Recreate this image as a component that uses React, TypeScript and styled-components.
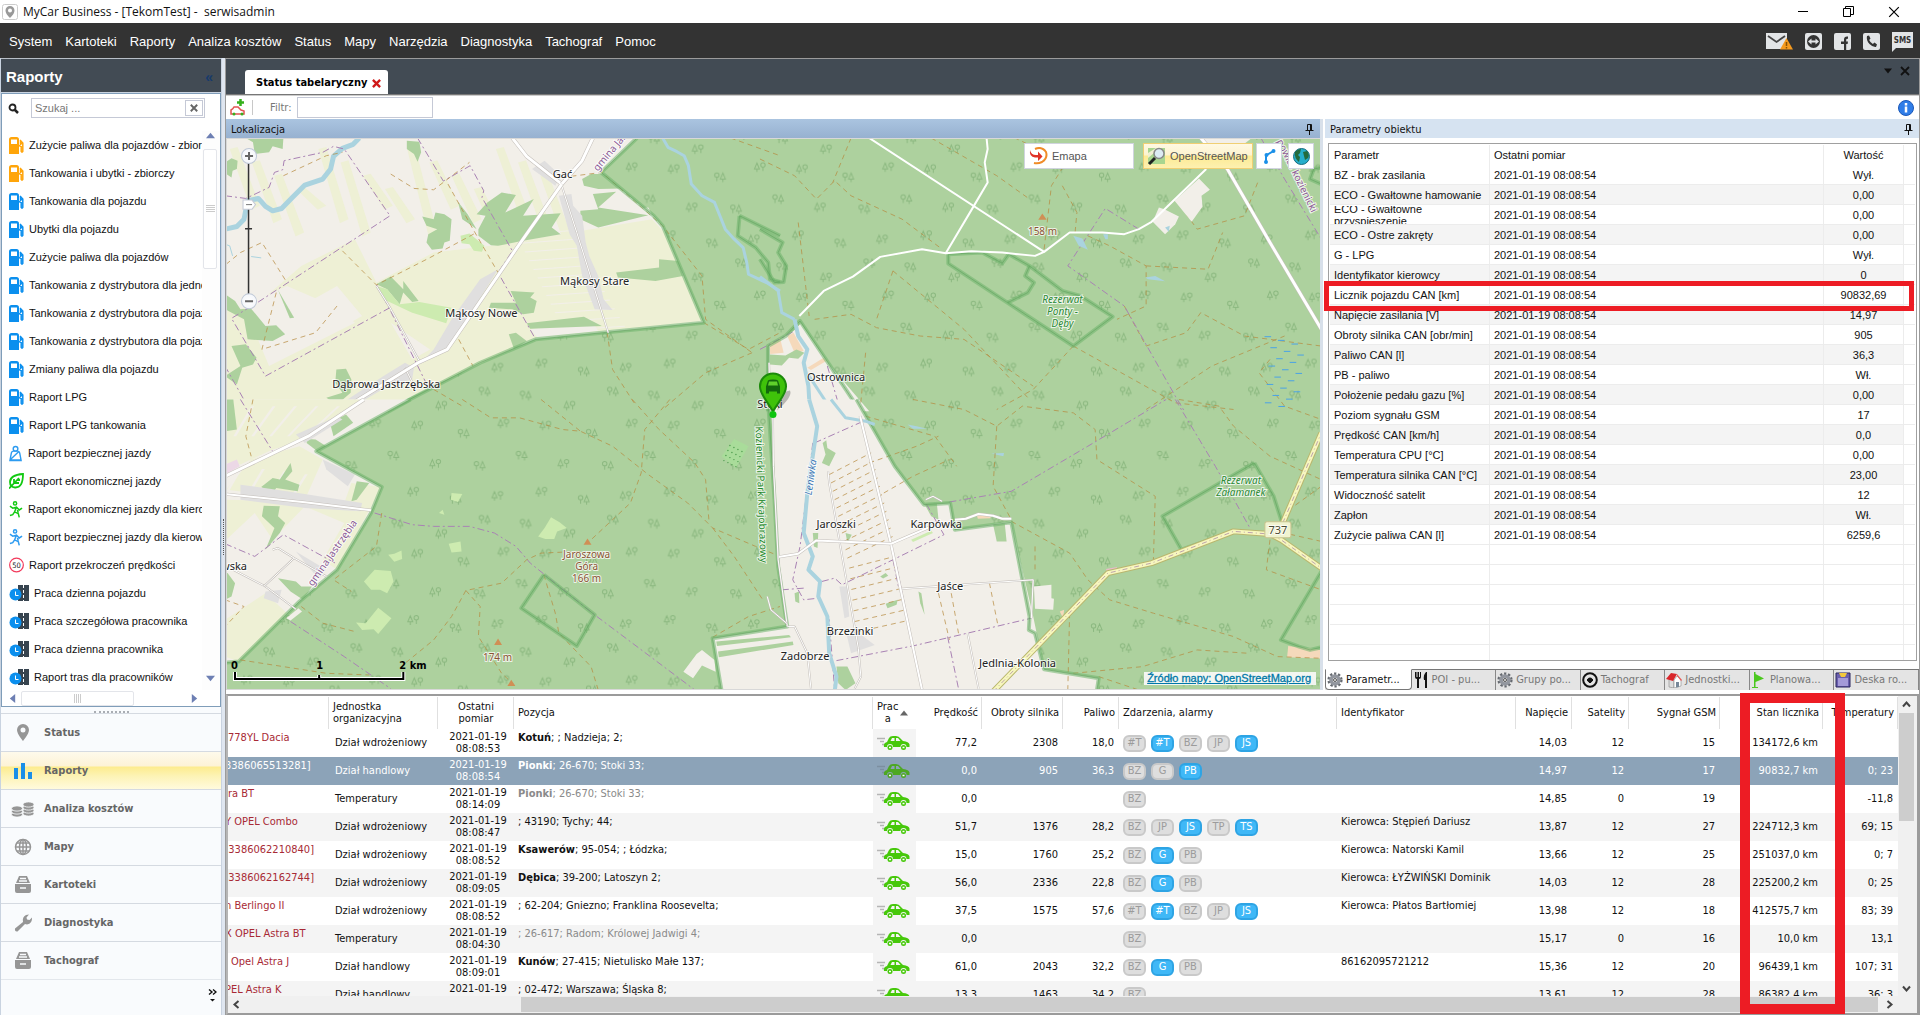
import React from 'react';
import styled, { createGlobalStyle, css } from 'styled-components';

const tahoma = '"DejaVu Sans Condensed", "DejaVu Sans", sans-serif';
const msSans = '"Liberation Sans", Arial, sans-serif';
const segoe = '"Open Sans", "Noto Sans", sans-serif';

const Global = createGlobalStyle`
  * { box-sizing: border-box; }
  body { margin: 0; background: #fff; font: 11px/14px ${msSans}; color: #111; overflow: hidden; }
  button, input { font: inherit; color: inherit; border: 0; padding: 0; margin: 0; background: none; }
  svg { display: block; flex: none; }
`;

/* ---------- window frame ---------- */

const Window = styled.div`
  display: flex;
  flex-direction: column;
  height: 100vh;
`;

const TitleBar = styled.header`
  display: flex;
  align-items: center;
  height: 23px;
  padding: 0 20px 0 2px;
  gap: 5px;
  font: 12px/22px ${segoe};
  white-space: pre;
`;

const Spacer = styled.div`
  flex: 1;
`;

const WindowButtons = styled.div`
  display: flex;
  gap: 34px;
`;

const MenuBar = styled.nav`
  display: flex;
  align-items: center;
  height: 35px;
  padding: 2px 7px 0 9px;
  gap: 13px;
  background: #333;
  color: #fff;
  font-size: 13px;
`;

const Contacts = styled.div`
  display: flex;
  align-items: center;
  gap: 12px;
`;

const Body = styled.div`
  display: flex;
  flex: 1;
  min-height: 0;
  background: #dfe6f0;
`;

/* ---------- sidebar ---------- */

const Sidebar = styled.aside`
  display: flex;
  flex-direction: column;
  width: 222px;
  border-left: 1px solid #c9d3e0;
  border-right: 1px solid #c9d3e0;
  background: #f9fbfd;
`;

const SideHeader = styled.h1`
  display: flex;
  justify-content: space-between;
  align-items: center;
  height: 35px;
  margin: 0;
  padding: 3px 8px 0 5px;
  border-top: 1px solid #b8bec6;
  border-bottom: 1px solid #c9d3e0;
  background: #424b54;
  color: #fff;
  font: bold 15px/20px ${msSans};
`;

const Collapse = styled.button`
  && { color: #173a6b; font-size: 14px; font-weight: bold; }
`;

const ListBox = styled.div`
  display: flex;
  flex-direction: column;
  flex: 1;
  min-height: 0;
  border: 1px solid #7f9db9;
  background: #fff;
`;

const SearchRow = styled.div`
  display: flex;
  align-items: center;
  gap: 12px;
  height: 37px;
  padding: 0 15px 9px 6px;
`;

const SearchBox = styled.label`
  display: flex;
  align-items: center;
  flex: 1;
  height: 20px;
  padding: 0 1px 0 3px;
  border: 1px solid #c5c9d6;
  background: #fff;
`;

const TextInput = styled.input`
  flex: 1;
  min-width: 0;
  height: 18px;
  outline: none;
  &::placeholder { color: #777; opacity: 1; }
`;

const ClearButton = styled.button`
  display: grid;
  place-items: center;
  width: 18px;
  height: 16px;
  border: 1px solid #c5c9d6 !important;
`;

const ListArea = styled.div`
  display: flex;
  flex: 1;
  min-height: 0;
`;

const ReportList = styled.ul`
  flex: 1;
  min-width: 0;
  margin: 0;
  padding: 0 0 0 7px;
  list-style: none;
  overflow: hidden;
`;

const ReportItem = styled.li`
  height: 28px;
`;

const ReportButton = styled.button`
  display: flex;
  align-items: center;
  gap: 5px;
  width: 100%;
  height: 28px;
  overflow: hidden;
  white-space: nowrap;
  text-align: left;
`;

const SideVScroll = styled.div`
  display: flex;
  flex-direction: column;
  align-items: center;
  width: 18px;
  background: #fdfdfd;
  padding: 0 2px 7px 0;
`;

const SideThumb = styled.div<{ $wide?: boolean }>`
  display: grid;
  place-items: center;
  border: 1px solid #e3e5ea;
  border-radius: 2px;
  background: #fff;
  ${p => p.$wide ? css`width: 113px; height: 15px; margin: 0 56px 0 4px;` : css`width: 14px; height: 120px; margin: 9px 0 auto;`}
`;

const SideHScroll = styled.div`
  display: flex;
  align-items: center;
  height: 16px;
  padding-left: 6px;
`;

const Grip = styled.div`
  width: 35px;
  height: 6px;
  margin: 0 auto;
  border-bottom: 2px dotted #a9adb3;
`;

const NavList = styled.nav`
  display: flex;
  flex-direction: column;
  height: 302px;
  flex: none;
`;

const NavButton = styled.button<{ $active?: boolean }>`
  && {
    display: grid;
    grid-template-columns: 43px 1fr;
    align-items: center;
    justify-items: center;
    height: 38px;
    border-top: 1px solid #d5dae1;
    background: ${p => p.$active ? 'linear-gradient(#fefaeb 0, #fdf3d6 14px, #fdec8e 15px, #fdf3b5 24px, #fffbe0 38px)' : '#f9fbfd'};
    color: #666;
    font: bold 11px/14px ${tahoma};
  }
  span { justify-self: start; }
`;

const NavFooter = styled.div`
  display: flex;
  flex: 1;
  justify-content: flex-end;
  align-items: center;
  padding: 0 4px 4px 0;
  border-top: 1px solid #e3e7ec;
`;

const Splitter = styled.div`
  display: grid;
  place-items: center;
  width: 3px;
  &::after { content: ''; height: 36px; border-left: 1px dotted #555; }
`;

/* ---------- document area ---------- */

const Document = styled.main`
  display: flex;
  flex-direction: column;
  flex: 1;
  min-width: 0;
  border: solid #9b9b9b;
  border-width: 1px 1px 0 1px;
  background: #fff;
`;

const TabStrip = styled.div`
  display: flex;
  align-items: flex-end;
  height: 36px;
  padding: 0 9px 0 19px;
  background: #424b54;
  border-bottom: 1px solid #777;
`;

const DocTab = styled.button`
  && {
    display: flex;
    align-items: center;
    gap: 5px;
    height: 24px;
    padding: 2px 7px 0 11px;
    border-radius: 3px 3px 0 0;
    background: #fff;
    color: #000;
    font: bold 11px/14px ${tahoma};
  }
`;

const StripButtons = styled.div`
  display: flex;
  align-items: center;
  gap: 8px;
  height: 100%;
  padding-bottom: 11px;
`;

const Toolbar = styled.div`
  display: flex;
  align-items: center;
  height: 24px;
  padding: 0 5px 0 4px;
  border-top: 1px solid #ccc;
  color: #777;
  font: 11px/14px ${tahoma};
`;

const Divider = styled.div`
  width: 1px;
  height: 15px;
  margin: 0 17px 0 6px;
  background: #c8c8c8;
`;

const FilterLabel = styled.label`
  display: flex;
  align-items: center;
  gap: 6px;
`;

const FilterInput = styled.input`
  && { width: 136px; height: 21px; border: 1px solid #c5c9d6; }
`;

const Panels = styled.div`
  display: flex;
  flex: 1;
  min-height: 0;
`;

const MapPanel = styled.section`
  display: flex;
  flex-direction: column;
  flex: 1;
  min-width: 0;
  border-right: 3px solid #d8e0ea;
`;

const PanelTitle = styled.h2<{ $active?: boolean }>`
  display: flex;
  justify-content: space-between;
  align-items: center;
  height: 19px;
  margin: 0;
  padding: 2px 6px 0 5px;
  background: ${p => p.$active ? 'linear-gradient(#aac4e0, #97b1d0)' : '#d6e3f1'};
  color: #111;
  font: 11px/16px ${tahoma};
`;

const MapView = styled.div`
  position: relative;
  flex: 1;
  min-height: 0;
  overflow: hidden;
  border: 1px solid #d8d8d8;
  border-width: 1px 0 1px 1px;
`;

const MapSvg = styled.svg`
  width: 100%;
  height: 100%;
`;

const MapTools = styled.div`
  position: absolute;
  top: 4px;
  right: 6px;
  display: flex;
  gap: 6px;
`;

const MapTool = styled.button<{ $on?: boolean; $wide?: boolean }>`
  && {
    display: flex;
    align-items: center;
    justify-content: ${p => p.$wide ? 'flex-start' : 'center'};
    gap: 4px;
    width: ${p => p.$wide ? '110px' : '26px'};
    height: 26px;
    padding-left: ${p => p.$wide ? '4px' : '0'};
    margin-right: ${p => p.$wide && !p.$on ? '3px' : p.$on ? '-3px' : '0'};
    border: 1px solid ${p => p.$on ? '#f0cf73' : '#d0d4de'};
    background: ${p => p.$on ? 'linear-gradient(#fff9e2 0, #fdf3cf 11px, #fdeb93 12px, #fdf0b0 100%)' : '#fff'};
    color: #555;
    font-size: 11px;
    white-space: nowrap;
  }
`;

const Attribution = styled.a`
  position: absolute;
  right: 4px;
  bottom: 4px;
  padding: 0 5px 0 3px;
  background: rgba(248, 248, 248, 0.92);
  color: #0078a8;
  font: 11px/13px ${msSans};
  -webkit-text-stroke: 0.3px #0078a8;
`;

const ParamPanel = styled.section`
  display: flex;
  flex-direction: column;
  width: 596px;
  padding-left: 2px;
  position: relative;
`;

const ParamFrame = styled.div`
  flex: 1;
  min-height: 0;
  margin: 5px 2px 8px 3px;
  padding: 1px;
  overflow: hidden;
  border: 1px solid #a0a0a0;
`;

const ParamTable = styled.table`
  width: 100%;
  table-layout: fixed;
  border-collapse: separate;
  border-spacing: 0;
  th { font-weight: normal; height: 20px; padding: 0 4px; text-align: left; border-right: 1px solid #ececec; }
  td { height: 20px; padding: 0 4px; border-right: 1px solid #ececec; border-bottom: 1px solid #ececec; white-space: nowrap; }
  th:nth-child(3), td:nth-child(3) { text-align: center; }
  th:last-child, td:last-child { border-right: 0; }
`;

const ParamRow = styled.tr<{ $odd?: boolean }>`
  td:not(:last-child) { background: ${p => p.$odd ? '#f4f4f4' : '#fff'}; }
`;

const TwoLines = styled.div`
  display: flex;
  align-items: center;
  height: 18px;
  overflow: hidden;
  white-space: normal;
  line-height: 12px;
`;

const BottomTabs = styled.div`
  display: flex;
  height: 21px;
  background: #e4e4e4;
`;

const BottomTab = styled.button<{ $active?: boolean }>`
  && {
    display: flex;
    align-items: center;
    gap: 3px;
    flex: 1 1 0;
    min-width: 0;
    padding: 0 4px 0 1px;
    white-space: nowrap;
    font: 11px/14px ${tahoma};
    color: ${p => p.$active ? '#111' : '#777'};
    border-top: 1px solid ${p => p.$active ? 'transparent' : '#777'};
    ${p => p.$active
      ? css`background: #fff; border-right: 1px solid #777; border-left: 1px solid #777; border-bottom: 1px solid #777; border-radius: 0 0 4px 4px;`
      : css`box-shadow: inset -1px 0 #888;`}
  }
`;

const Highlight = styled.div<{ $w: number }>`
  position: absolute;
  border: ${p => p.$w}px solid #ed1c24;
  pointer-events: none;
`;

const RowHighlight = styled(Highlight)`
  top: 162px;
  left: 1px;
  right: 5px;
  height: 30px;
`;

/* ---------- vehicle grid ---------- */

const GridPanel = styled.section`
  position: relative;
  flex: none;
  height: 321px;
  margin-top: 4px;
  border: 2px solid #9b9b9b;
  border-left-color: #b5b5b5;
`;

const GridArea = styled.div`
  display: flex;
  height: 300px;
  overflow: hidden;
`;

const GridScroll = styled.div`
  flex: 1;
  min-width: 0;
  overflow: hidden;
`;

const Grid = styled.table`
  width: 100%;
  table-layout: fixed;
  border-collapse: separate;
  border-spacing: 0;
  font: 11px/12px ${tahoma};
`;

type Align = 'left' | 'right' | 'center';

const Head = styled.th<{ $a: Align; $line?: boolean }>`
  height: 33px;
  padding: 1px 4px 0 4px;
  text-align: ${p => p.$a};
  font-weight: normal;
  white-space: nowrap;
  background: ${p => p.$line ? 'linear-gradient(#e0e0e0, #e0e0e0) right 1px / 1px 32px no-repeat' : 'none'};
`;

const SortHead = styled.div`
  display: flex;
  align-items: center;
  gap: 2px;
`;

const Row = styled.tr<{ $sel?: boolean; $odd?: boolean }>`
  background: ${p => p.$sel ? '#8ca3b8' : p.$odd ? '#f4f4f4' : '#fff'};
  color: ${p => p.$sel ? '#fff' : '#111'};
`;

const Cell = styled.td<{ $a?: Align; $top?: boolean; $shade?: boolean; $pad?: number }>`
  height: 28px;
  padding: ${p => p.$top ? '3px' : '0'} ${p => p.$a === 'right' ? '5px' : '0'} 0 ${p => p.$pad ?? 4}px;
  text-align: ${p => p.$a ?? 'left'};
  vertical-align: ${p => p.$top ? 'top' : 'middle'};
  white-space: nowrap;
  overflow: hidden;
  background: ${p => p.$shade ? '#f4f4f4' : 'transparent'};
`;

const Plate = styled.div<{ $cut?: number; $sel?: boolean }>`
  text-indent: ${p => p.$cut ?? 0}px;
  color: ${p => p.$sel ? '#fff' : '#a82a35'};
`;

const Place = styled.span<{ $dim?: boolean }>`
  color: ${p => p.$dim ? '#8a8a8a' : 'inherit'};
`;

const Chips = styled.div`
  display: flex;
  gap: 5px;
`;

const Chip = styled.span<{ $on?: boolean }>`
  display: grid;
  place-items: center;
  width: 23px;
  height: 17px;
  border: 2px solid ${p => p.$on ? '#2ea4e4' : '#c9c9c9'};
  border-radius: 6px;
  background: ${p => p.$on ? '#3fb8f7' : '#dedede'};
  color: ${p => p.$on ? '#fff' : '#9b9b9b'};
`;

const VScroll = styled.div`
  display: flex;
  flex-direction: column;
  align-items: center;
  justify-content: space-between;
  width: 19px;
  padding-right: 2px;
  background: #f0f0f0;
`;

const VThumb = styled.div`
  width: 15px;
  height: 108px;
  margin: 1px 0 auto;
  background: #cdcdcd;
`;

const HScroll = styled.div`
  display: flex;
  align-items: center;
  height: 17px;
  background: #f0f0f0;
`;

const HThumb = styled.div`
  flex: 1;
  height: 15px;
  margin: 0 3px 0 276px;
  background: #cdcdcd;
`;

const ArrowButton = styled.button`
  display: grid;
  place-items: center;
  width: 17px;
  height: 16px;
`;

const ColumnHighlight = styled(Highlight)`
  top: -3px;
  right: 72px;
  bottom: -1px;
  width: 105px;
`;

/* ---------- icons ---------- */

const Chevron = ({ r }: { r: number }) => (
  <svg width="9" height="9" viewBox="0 0 9 9" fill="none" stroke="#444" strokeWidth="2">
    <path d="M1 6.500 4.500 2.500 8 6.500" transform={`rotate(${r} 4.5 4.5)`} />
  </svg>
);

const Triangle = ({ r, c = '#6d7fb3', s = 9 }: { r: number; c?: string; s?: number }) => (
  <svg width={s} height={s} viewBox="0 0 10 10"><path d="M0 8 5 2l5 6z" fill={c} transform={`rotate(${r} 5 5)`} /></svg>
);

const Cross = ({ s, w, c }: { s: number; w: number; c: string }) => (
  <svg width={s} height={s} viewBox="0 0 10 10" stroke={c} strokeWidth={w}><path d="M1 1l8 8M9 1 1 9" /></svg>
);

const Pin = ({ c = '#111' }: { c?: string }) => (
  <svg width="9" height="11" viewBox="0 0 9 11" fill="none" stroke={c}><path d="M2.500 6.500v-6h4v6M5.500.5v6M.5 6.500h8M4.500 6.500V11" /></svg>
);

const Pump = ({ c }: { c: string }) => (
  <svg width="15" height="17" viewBox="0 0 15 17" fill="none" stroke={c}>
    <path d="M0 17V2.500Q0 0 2.500 0h5Q10 0 10 2.500V17z" fill={c} stroke="none" />
    <path d="M2 2.500h6V7H2z" fill="#fff" stroke="none" />
    <path d="M11 3l2.800 3v8.500q-.8 1.500-1.600 0V9.500L10 8.500M13 6l-1.500 1.500V4" strokeWidth="1.500" />
  </svg>
);

const Belt = () => (
  <svg width="14" height="17" viewBox="0 0 15 17" fill="none" stroke="#2d9bf0" strokeWidth="1.500">
    <circle cx="7" cy="3.500" r="2.500" /><path d="M1 16l1.500-8q.5-2 2.500-2h4q2 0 2.500 2L13 16zM10 7 1 15.500M1 15.500h12" />
  </svg>
);

const Leaf = () => (
  <svg width="15" height="16" viewBox="0 0 15 16" fill="none" stroke="#12c912" strokeWidth="1.800">
    <path d="M14 1Q1 2 1 9q0 5 5 5.500Q14 15 14 1zM0 15.500 10 5M5 10V6M5 10h5M8 7h3" />
  </svg>
);

const Runner = ({ c }: { c: string }) => (
  <svg width="14" height="17" viewBox="0 0 15 17" fill="none" stroke={c} strokeWidth="1.600">
    <circle cx="6.500" cy="2" r="1.700" /><path d="M1 5l3 2 4-1 3 3 3-2M8 6l-2 5 4 2 1 4M6 11l-2 3-3 1M9 9l1 3" />
  </svg>
);

const Limit = () => (
  <svg width="15" height="16" viewBox="0 0 16 16">
    <circle cx="8" cy="8" r="7.300" fill="#fff" stroke="#f23a5c" strokeWidth="1.300" />
    <text x="8" y="11" fontSize="8" textAnchor="middle" fontFamily="DejaVu Sans Condensed" fill="#222">50</text>
  </svg>
);

const Work = () => (
  <svg width="20" height="16" viewBox="0 0 20 16">
    <path d="M9 0h11v16H9z" fill="#37444f" /><path d="M14.500 0v16" stroke="#fff" strokeDasharray="3 2" />
    <circle cx="6.500" cy="9.500" r="6" fill="#0b8fee" /><path d="M6.500 6.500v4h3" fill="none" stroke="#fff" />
  </svg>
);

const NavIcon = ({ kind }: { kind: string }) => {
  const g = '#969696';
  return (
    <svg width="24" height="18" viewBox="0 0 24 18">
      {kind === 'pin' && <path d="M12 0a6 6 0 0 0-6 6c0 4 6 11 6 11s6-7 6-11a6 6 0 0 0-6-6zm0 3.500a2.500 2.500 0 1 1 0 5 2.500 2.500 0 0 1 0-5z" fill={g} fillRule="evenodd" />}
      {kind === 'bars' && <path d="M3 6h4v11H3zM10 1h4v16h-4zM17 10h4v7h-4z" fill="#1a8fe8" />}
      {kind === 'coins' && [0, 3, 6, 9].map(y => (
        <g key={y} fill={g} stroke="#f9fbfd" strokeWidth=".8">
          <ellipse cx="17.500" cy={13.5 - y} rx="5.500" ry="2.600" />
          {y < 7 && <ellipse cx="6" cy={14.5 - y} rx="5.500" ry="2.600" />}
        </g>
      ))}
      {kind === 'globe' && <g fill="none" stroke={g} strokeWidth="1.500"><circle cx="12" cy="9" r="7.500" /><ellipse cx="12" cy="9" rx="3.500" ry="7.500" /><path d="M12 1.500v15M4.500 9h15M5.500 5h13M5.500 13h13" /></g>}
      {kind === 'drawer' && <g fill={g}><path d="M8 0h8l3 7H5zM4 8h16v7q0 2-2 2H6q-2 0-2-2z" /><path d="M9 2.500h6M8 5h8M9 12h6" stroke="#f9fbfd" strokeWidth="1.500" /></g>}
      {kind === 'wrench' && <path d="M4 14.500 12 8q-1-5 3-7l3-.5-2.500 3 .5 2 2.500.5L21 3.500q.5 6-5 7l-2-.5-7.500 7.500q-3 .5-2.500-3z" fill={g} />}
    </svg>
  );
};

const Car = ({ sel }: { sel?: boolean }) => (
  <svg width="33" height="16" viewBox="0 0 33 16">
    <path d="M0 3.500h8M3 6.500h4M5 9.500h2" stroke={sel ? '#7c8fa0' : '#b5b5b5'} strokeWidth="1.500" />
    <g fill={sel ? '#4da822' : '#46c80a'}>
      <path d="M7 12q-1-4 3-5l2-4q1-2 4-2h3q3 0 4.500 2.500L26 6q6 .5 6.500 3.500V12h-3a3 3 0 0 0-6 0H16a3 3 0 0 0-6 0z" />
      <circle cx="13" cy="12.500" r="2.500" /><circle cx="26.500" cy="12.500" r="2.500" />
    </g>
    <path d="M13.500 6 15 3h2.500v3zM19 3h2l2.500 3H19z" fill={sel ? '#8ca3b8' : '#f4f4f4'} />
    <path d="M12 12.500h2M25.500 12.500h2" stroke="#fff" strokeWidth="1.500" />
  </svg>
);

const Gear = () => (
  <svg width="16" height="16" viewBox="0 0 16 16" fill="none">
    <circle cx="8" cy="8" r="6.300" stroke="#666a70" strokeWidth="2.600" strokeDasharray="2.200 1.800" />
    <circle cx="8" cy="8" r="4" stroke="#92969e" strokeWidth="3.500" /><circle cx="8" cy="8" r="1.500" fill="#eee" stroke="#555" />
  </svg>
);

const TabIcon = ({ kind }: { kind: string }) => {
  if (kind === 'gear') return <Gear />;
  return (
    <svg width="16" height="16" viewBox="0 0 16 16">
      {kind === 'fork' && <path d="M2 0v5q0 2 2 2v9h2V7q2 0 2-2V0H7v5H6V0H4.500v5h-1V0zM13 0q-3 3-2 8h1v8h2V0z" fill="#111" />}
      {kind === 'wheel' && <g fill="none" stroke="#111" strokeWidth="2"><circle cx="8" cy="8" r="6.800" /><circle cx="8" cy="8" r="1.500" fill="#111" /><path d="M5 8h6M8 8v3" /></g>}
      {kind === 'house' && <g><path d="M3 7v8l5 1V8z" fill="#ddd" stroke="#888" strokeWidth=".6" /><path d="M8 8l3-4 4 4v6l-7 2z" fill="#fff" stroke="#888" strokeWidth=".6" /><path d="M0 7 5 1l6 1-4 7z" fill="#d9262b" /><path d="M11 2l5 6-1 1-4-5z" fill="#e85b57" /><path d="M10 10h3v5l-3 .5z" fill="#789" /></g>}
      {kind === 'flag' && <g fill="#4bc81e"><path d="M3 0h1.500v15H3zM1 15h6v1H1zM4.500 2 13 6.500 4.500 10z" /></g>}
      {kind === 'disk' && <g><path d="M1 1h14v14H1z" fill="#6a5fae" stroke="#29245c" /><path d="M4 1h8l-2 4H6z" fill="#f2c83c" /><path d="M3 6h10v8H3z" fill="#a49ad8" /></g>}
    </svg>
  );
};

/* ---------- map ---------- */

const Shape = ({ d, f }: { d: string; f: string }) => <polygon points={d} fill={f} />;
const Line = ({ d, c, w, dash, o }: { d: string; c: string; w: number; dash?: string; o?: number }) => (
  <polyline points={d} fill="none" stroke={c} strokeWidth={w} strokeDasharray={dash} opacity={o} strokeLinejoin="round" vectorEffect="non-scaling-stroke" />
);
const Road = ({ d, w = 2 }: { d: string; w?: number }) => <><Line d={d} c="#c4bfba" w={w + 1} /><Line d={d} c="#fff" w={w} /></>;
const Yellow = ({ d }: { d: string }) => <><Line d={d} c="#b9b66e" w={6} /><Line d={d} c="#f7f7be" w={4} /><Line d={d} c="#bda3ad" w={1} dash="5 3 1 3" /></>;
const Border = ({ d }: { d: string }) => <Line d={d} c="#a982b4" w={1} dash="7 3 2 3" />;
const Track = ({ d }: { d: string }) => <Line d={d} c="#b78a3e" w={1} dash="5 4" o={0.7} />;
const Park = ({ d }: { d: string }) => <><Line d={d} c="#6fb56c" w={4} o={0.55} /><Line d={d} c="#5a9c58" w={1} o={0.5} /></>;

const FOREST = '#add19e', FIELD = '#eef0d5', LAND = '#f2efe9', GRASS = '#cdebb0', TOWN = '#e0dfdf', WATER = '#aad3df';

const fieldStrips: string[] = [];
for (let i = 0; i < 15; i++) {
  const x = 30 + i * 62;
  fieldStrips.push(`${x},${90 + (i % 4) * 40} ${x + 22},${84 + (i % 4) * 40} ${x + 84},${260 + (i % 3) * 40} ${x + 60},${272 + (i % 3) * 40}`);
}

const pastures: string[] = [];
for (let i = 0; i < 12; i++) {
  const y = 345 + i * 26;
  pastures.push(`${830 + i * 12},${y} ${980 + i * 14},${y - 12} ${980 + i * 14},${y - 9} ${832 + i * 12},${y + 3}`);
}

const NorthWest = () => (
  <g transform="translate(220 120) scale(.35714 .33333)">
    <Shape f={LAND} d="0,57 1168,57 1068,160 1215,290 1240,320 1300,470 1355,610 885,660 730,730 540,830 470,875 0,875" />
    {fieldStrips.map(d => <Shape key={d} f={FIELD} d={d} />)}
    <Shape f={FIELD} d="0,580 100,560 230,440 380,360 440,490 600,400 760,380 870,360 1210,300 1245,340 1350,605 885,655 725,735 460,870 0,870" />
    <Shape f={LAND} d="70,560 190,500 320,560 380,610 140,740" />
    <Shape f={LAND} d="230,560 330,500 400,590 350,620" />
    <Shape f={LAND} d="480,610 590,690 540,720" />
    <Shape f={LAND} d="870,630 1040,600 1060,635 890,655" />
    <Shape f={LAND} d="1060,280 1200,265 1210,285 1070,300" />
    {pastures.map(d => <Shape key={d} f={LAND} d={d} />)}
    <Shape f={FOREST} d="75,57 180,57 178,90 150,82 140,100 100,105 95,70" />
    <Shape f={FOREST} d="17,130 35,118 52,125 50,150 38,155 35,175 20,165" />
    <Shape f={FOREST} d="525,65 560,68 565,100 555,128 545,105 525,90" />
    <Shape f={FOREST} d="725,330 745,290 720,285 750,250 790,220 830,228 800,280 880,240 850,290 955,282 930,325 955,345 850,365 780,380 760,378 725,350" />
    <Shape f={FOREST} d="568,292 600,300 605,280 630,285 650,300 645,365 630,370 625,388 595,392 580,370 585,345 610,330 580,320" />
    <Shape f={FOREST} d="668,248 695,285 720,330 705,318 680,300" />
    <Shape f={FOREST} d="440,495 480,472 515,510 515,485 558,545 540,548 515,520 505,555 470,510" />
    <Shape f={GRASS} d="440,500 470,510 505,555 560,548 650,565 635,612 570,590 540,580 460,540" />
    <Shape f={GRASS} d="675,350 700,343 742,380 735,398 712,395 700,375 678,372" />
    <Shape f={FOREST} d="17,525 45,545 60,570 90,568 130,620 160,618 185,645 150,665 80,660 70,600 17,570" />
    <Shape f={FOREST} d="165,512 210,595 198,597" />
    <Shape f={FOREST} d="35,680 75,675 105,715 95,735 65,745 50,795 17,770 60,740" />
    <Shape f={FOREST} d="328,750 355,748 370,780 368,820 330,855 300,835 345,820 325,790" />
    <Shape f={FOREST} d="1010,275 1060,270 1045,225 1110,218 1060,265 1200,288 1060,325 1010,300" />
    <Shape f={FOREST} d="1110,460 1230,445 1230,420 1285,425 1297,470 1220,485 1115,475" />
    <Shape f={FOREST} d="860,612 1020,592 1070,620 870,628" />
    <Shape f={FOREST} d="815,515 882,520 870,535 888,545 880,580 850,585 820,570 755,565 760,550 830,550" />
    <Shape f={FOREST} d="1015,180 1040,165 1075,165 1125,208 1060,210 1020,200" />
    <Shape f={FOREST} d="810,645 830,640 860,665 825,690" />
    <Shape f={TOWN} d="950,230 985,225 990,260 1015,290 1025,370 1035,410 1060,470 1075,540 1100,572 1050,570 1015,470 1000,380 980,345" />
    <Shape f={TOWN} d="650,600 730,480 780,450 640,690 560,735 600,690" />
    <Shape f={TOWN} d="330,860 460,770 520,730 545,745 540,780 480,795 370,865" />
    <Shape f={TOWN} d="875,150 910,125 955,170 940,200" />
    <Line c={WATER} w={5} d="17,330 50,322 70,300 80,245 110,238 130,262 150,275 175,268 205,235 240,198 290,180 312,150 320,112 345,88 375,76 392,57" />
    <Line c={WATER} w={3} d="1240,57 1255,85 1280,98 1300,110 1312,140 1320,195 1350,230 1385,250 1400,290 1415,330 1440,360 1465,385 1475,430 1480,465 1530,490 1568,515" />
    <Line c={WATER} w={1} d="17,375 30,380 38,410" /><Line c={WATER} w={1} d="90,412 118,416" />
    <Border d="17,230 75,238 140,205 155,160 178,152 182,125 290,100 320,82 350,90 478,290 110,548 35,597 130,770 478,565" />
    <Border d="555,57 627,186 702,140 740,215 735,235 820,395 780,460 885,660" />
    <Border d="440,497 475,565 590,815" /><Border d="17,740 85,870" />
    <Track d="20,435 60,400 120,370 190,490" /><Track d="180,170 300,110 345,100" /><Track d="345,395 440,497 590,415 720,340" />
    <Track d="480,165 545,208 600,212 700,130" /><Track d="640,195 710,330 780,460" /><Track d="160,520 120,690 270,640 330,560" />
    <Track d="960,175 1070,160 1240,320 1350,470 1360,600 1490,700" /><Track d="1355,610 1480,690 1568,640" /><Track d="1430,57 1568,110" />
    <Track d="1085,640 1100,750 1160,850" /><Track d="1490,700 1360,760 1240,870" /><Track d="670,660 710,740" /><Track d="600,810 680,860" />
    <Park d="1168,57 1068,160 1215,290 1240,320 1355,610 885,660 730,730 470,875" />
    <Park d="1455,290 1450,350 1500,385 1535,430 1540,480 1568,488" />
    <Park d="1455,290 1568,350" />
    <Road w={1} d="958,200 1000,340 1088,640" /><Road w={1} d="440,500 478,565 560,725" /><Road w={1} d="520,745 550,810" />
    <Road w={3} d="820,57 860,112 958,195 830,390 638,690 560,728 345,870" /><Road w={3} d="1045,57 1015,125 958,195" />
    <Shape f="#f5d9bb" d="1540,672 1570,660 1570,705 1540,702" />
  </g>
);

const SouthWest = () => (
  <g transform="translate(220 400) scale(.35714 .33333)">
    <Shape f={LAND} d="0,0 535,0 272,155 455,262 425,340 330,510 225,605 55,785 0,790" />
    <Shape f={FIELD} d="0,0 400,0 230,125 150,150 60,195 17,190" />
    <Shape f={FIELD} d="90,180 225,140 290,180 240,300 20,270" />
    <Shape f={FIELD} d="370,250 455,262 330,510 290,480 350,370 240,320 150,420 100,340 20,420 17,300 350,310" />
    <Shape f={FIELD} d="17,660 130,580 190,640 55,785 17,770" />
    {[0, 1, 2, 3, 4, 5].map(i => <Shape key={i} f={LAND} d={`${60 + i * 60},${200 + i * 8} ${68 + i * 60},${200 + i * 8} ${28 + i * 60},${275 + i * 6} ${20 + i * 60},${275 + i * 6}`} />)}
    {[0, 1, 2, 3, 4].map(i => <Shape key={i} f={LAND} d={`${90 + i * 60},20 ${98 + i * 60},20 ${48 + i * 50},110 ${40 + i * 50},110`} />)}
    <Shape f={FOREST} d="200,190 205,215 185,240 225,255 220,275 160,265 145,290 130,270 118,262 150,235 170,240" />
    <Shape f={FOREST} d="125,318 170,320 165,350 185,370 170,400 130,450 155,385 120,350" />
    <Shape f={FOREST} d="165,535 215,545 230,560 260,560 235,600 200,575" />
    <Shape f={FOREST} d="310,70 355,45 375,70 320,110" /><Shape f={FOREST} d="385,245 420,250 385,300 370,305" />
    <Shape f={FOREST} d="17,510 45,550 35,590 17,600" /><Shape f={FOREST} d="17,0 40,0 50,90 17,95" />
    <Shape f={FOREST} d="247,118 270,120 300,140 275,155 245,130" />
    <Shape f={TOWN} d="60,255 190,275 400,310 395,335 240,325 60,300" /><Shape f={TOWN} d="215,105 330,50 345,60 240,130" />
    <Shape f={TOWN} d="290,180 380,225 360,260 300,210" /><Shape f={TOWN} d="130,575 175,570 165,610 125,595" /><Shape f={TOWN} d="215,455 300,510 280,540" />
    <Shape f="#ecd8e6" d="17,195 50,180 58,200 17,225" />
    <Track d="95,0 75,110 90,170" /><Track d="17,600 70,620 17,680" /><Track d="455,340 440,440 320,540 370,575" />
    <Border d="60,0 150,155" /><Border d="17,432 100,470 180,405 325,490" />
    <Park d="535,0 272,155 455,262 425,340 330,510 225,605 55,785 0,790" />
    <Border d="435,340 540,375 600,380 700,380 770,400 830,440 870,490 1050,645 1330,870" />
    <Border d="200,665 350,770 480,866" />
    <Track d="680,0 760,55 840,55 960,90 1010,95 1100,140 1200,225 1310,310 1380,385 1500,440 1568,470" />
    <Track d="1155,0 1230,90 1330,190 1360,240 1370,370" /><Track d="1260,0 1190,90 1180,220 1150,310 1030,430" />
    <Track d="900,0 1010,95" /><Track d="1010,455 900,460 860,480 790,550 690,572 650,650 600,720 520,790" />
    <Track d="690,572 730,620 725,710 790,820 830,860" /><Track d="908,525 940,640 950,700 1040,800 1060,870" />
    <Track d="230,620 290,670 380,695" /><Track d="60,780 180,800 300,820 420,825" /><Track d="1380,385 1440,470 1520,600" /><Track d="1380,712 1480,650 1568,620" />
    <Park d="908,525 845,625 1000,738 1050,645 908,525" />
    <Shape f={GRASS} d="892,410 910,385 928,353 952,368 972,385 945,395 937,418 912,418" />
    <Shape f={GRASS} d="405,545 435,510 480,514 488,545 470,580 450,570 425,570" />
    <Shape f={GRASS} d="383,668 410,670 445,624 482,655 445,702 432,688 400,690" />
    <Shape f={GRASS} d="642,432 675,425 678,455 650,458" /><Shape f={GRASS} d="650,280 680,283 668,307 648,300" />
    <Shape f={GRASS} d="473,465 490,462 510,452 512,478 490,486" /><Shape f={GRASS} d="615,340 625,330 630,345" />
    <Shape f="#a9dc9a" d="1440,118 1480,140 1445,205 1405,170" />
    <Shape f={LAND} d="1298,815 1335,762 1350,750 1385,780 1388,815 1350,797 1325,835" /><Shape f={LAND} d="188,655 222,625 232,635 200,662" />
    <Road w={3} d="405,0 250,110 17,230" /><Road w={2} d="17,283 240,308 425,332" />
    <Road w={1} d="40,510 130,560 215,628" /><Road w={1} d="125,560 210,475 165,445 150,450" /><Road w={1} d="210,475 300,530" />
    {[[1030, 427], [780, 727], [817, 850]].map(([x, y]) => <Shape key={x} f="#d08f55" d={`${x - 11},${y + 8} ${x},${y - 11} ${x + 11},${y + 8}`} />)}
  </g>
);

const NorthEast = () => (
  <g transform="translate(760 120) scale(.36364 .33333)">
    <Shape f={LAND} d="25,680 95,632 112,612 190,735 300,875 25,875" />
    <Shape f="#f5d9bb" d="27,680 55,655 65,700 28,704" /><Shape f="#f5d9bb" d="75,650 92,640 120,695 95,700" /><Shape f="#f5d9bb" d="130,745 175,715 182,725 140,752" />
    <Shape f={FOREST} d="27,705 70,708 100,690 122,700 105,718 80,715 60,738 27,735" />
    <Track d="0,120 95,170 155,240 205,185 250,230 330,270 390,300 500,390" /><Track d="250,57 200,190" /><Track d="470,57 650,170 740,240" />
    <Track d="105,310 135,590" /><Track d="150,600 250,585 320,625 440,650 560,660 750,800" /><Track d="365,455 320,600" /><Track d="365,455 560,630 740,840" />
    <Track d="780,390 800,200 840,130 700,57" /><Track d="830,200 870,280 865,340" /><Track d="860,680 1140,850 1300,870" /><Track d="860,680 750,810 650,870" />
    <Track d="900,350 960,380 1060,440 1060,560 980,600" /><Track d="1060,440 1230,450 1270,340" /><Track d="1140,240 1200,330 1330,290 1370,180" />
    <Track d="1000,560 1060,680 1170,640 1210,580 1330,650 1541,680" /><Track d="1060,870 1240,740 1440,650" /><Track d="290,700 275,870" /><Track d="1400,720 1370,760 1440,860 1541,900" />
    <Border d="1040,330 948,268 845,440 1000,560 1140,830 1165,875" /><Border d="1375,57 1440,180 1541,360" /><Border d="0,690 100,632" /><Border d="185,740 220,870" />
    <Park d="22,875 22,680 70,650 110,605 190,735 275,875" />
    <Park d="517,405 517,433 860,680 968,592 880,530 830,515 740,440 683,405 665,432 610,400 517,405" /><Park d="740,440 728,470 752,490 735,520 680,550" />
    <Park d="0,330 62,370 50,400 72,440 65,488 40,490 0,420" /><Park d="1541,195 1510,180 1520,150 1541,145" />
    <Shape f={LAND} d="1078,308 1095,265 1110,270 1150,292 1140,315 1112,345" /><Shape f={LAND} d="1138,245 1205,178 1235,212 1212,230 1215,262 1185,308" />
    <Shape f={WATER} d="1112,325 1125,320 1122,338" /><Shape f={WATER} d="860,350 885,358 900,392 875,380" /><Shape f={WATER} d="942,345 955,345 955,360 948,360" />
    <Shape f={WATER} d="1058,475 1085,470 1112,486 1065,480" /><Shape f={LAND} d="1210,57 1350,57 1300,100 1240,90" />
    <Line c={WATER} w={3} d="0,472 50,515 60,580 95,600" /><Line c={WATER} w={4} d="95,600 105,650 130,690 120,730 133,800 137,875" /><Line c={WATER} w={3} d="135,770 195,870" />
    <Line c="#fff" w={2} d="300,57 780,398 755,410 665,400 580,396 510,402 445,390 330,413 255,472 175,515 108,590" />
    <Line c="#fff" w={2} d="510,402 590,255 625,190 617,130 625,90 622,57" /><Line c="#fff" w={2} d="780,398 850,340 940,340 1000,345 1040,330 1075,308 1225,150" />
    <Road w={3} d="1210,57 1283,150 1400,370 1541,630" /><Road w={1} d="25,730 28,870" />
    {Array.from({ length: 20 }, (_, i) => <Line key={i} c="#4aa3e6" w={1} d={`${1385 + (i * 37) % 95},${652 + i * 11} ${1403 + (i * 37) % 95},${652 + i * 11}`} />)}
    <Shape f="#d08f55" d="764,302 775,283 787,302" />
  </g>
);

const SouthEast = () => (
  <g transform="translate(760 400) scale(.36364 .33333)">
    <Shape f={LAND} d="30,0 265,0 370,200 450,315 522,310 535,390 690,365 750,650 780,808 930,835 925,875 -105,875 -130,715 75,680 50,500" />
    <Shape f={LAND} d="752,560 800,555 800,595 807,597 805,630 755,627" />
    <Shape f={FOREST} d="450,310 485,305 490,360 470,350" /><Shape f={FOREST} d="640,375 672,372 677,425 650,425" />
    <Shape f={FOREST} d="172,130 182,122 185,145 208,160 190,200 170,190 180,165" /><Shape f={FOREST} d="210,800 240,800 262,850 235,870 215,850" />
    <Shape f={GRASS} d="415,420 470,393 475,400 420,427" /><Shape f={FOREST} d="95,580 107,575 108,610 97,605" /><Shape f={FOREST} d="330,530 345,520 352,528 338,536" />
    <Shape f={FOREST} d="145,400 160,400 158,445 148,440" /><Shape f={FOREST} d="235,400 252,405 240,430" /><Shape f={FOREST} d="435,575 443,580 452,645 440,610" />
    <Shape f={FOREST} d="345,612 378,600 375,615 350,625" /><Shape f={FOREST} d="-120,725 80,705 85,712 -118,738" /><Shape f={FOREST} d="-115,755 90,725 92,735 -113,772" />
    <Shape f={TOWN} d="218,560 238,560 245,650 232,655" /><Shape f={TOWN} d="235,690 260,690 315,735 250,760" />
    <Shape f="#f5d9bb" d="1450,738 1541,750 1541,776 1447,772" /><Shape f="#f5d9bb" d="595,345 635,345 632,356 598,357" /><Shape f="#f5d9bb" d="823,635 835,630 832,655" />
    <Shape f="#e9bcc9" d="950,508 980,502 978,515 952,520" /><Shape f={WATER} d="405,75 430,80 458,88 420,88" /><Shape f={WATER} d="635,162 670,160 668,170" />
    {Array.from({ length: 11 }, (_, i) => <Track key={i} d={`${190 + i * 5},${225 + i * 25} ${305 + i * 6},${160 + i * 25}`} />)}
    {Array.from({ length: 7 }, (_, i) => <Track key={i} d={`${245 + i * 3},${505 + i * 32} ${370 + i * 6},${470 + i * 32}`} />)}
    <Track d="490,580 520,720" /><Track d="525,580 545,700" /><Track d="630,550 652,670" /><Track d="300,190 430,140 490,110" /><Track d="340,280 420,230 520,180" />
    <Track d="420,0 560,30 650,80 720,20 860,40 920,90 925,180 1085,290 1080,480" /><Track d="650,80 640,260 690,360" /><Track d="290,50 480,110 540,200" />
    <Track d="755,440 755,520" /><Track d="690,365 850,460 900,540 960,600 1080,640 1300,710 1420,770 1541,775" /><Track d="850,640 845,870" /><Track d="860,820 1050,800 1200,750 1340,760" />
    <Track d="1541,260 1440,340" /><Track d="1541,425 1440,400" /><Track d="1400,420 1390,510 1541,570" /><Track d="1150,0 1260,20 1300,80 1400,170 1541,240" /><Track d="930,830 1040,870" />
    <Border d="210,782 420,738 745,655" /><Border d="150,130 290,62" /><Border d="170,545 205,535 225,555 505,405 455,310" /><Border d="520,307 690,275 900,140 1115,0" />
    <Border d="1140,0 1250,200 1345,385" /><Border d="145,130 110,440 90,540 120,600 160,595 190,660 205,870" /><Border d="60,570 120,565" /><Border d="515,710 545,866" /><Border d="375,500 420,738" /><Border d="365,480 380,560" />
    <Park d="22,0 40,300 50,500 75,680 -130,715 -105,875" /><Park d="265,0 370,200 450,315 522,310 535,390 690,368 740,650 738,690 755,700 780,808 930,835 925,870" />
    <Park d="1357,190 1105,350 1157,450 1300,395" /><Park d="1357,190 1410,290 1432,365" /><Park d="1541,515 1430,720 1480,740 1510,750 1541,742" />
    <Line c={WATER} w={4} d="135,0 157,80 130,280 120,400 145,470 133,510 165,545 160,590 185,650 190,760 210,830 205,875" /><Line c={WATER} w={3} d="195,0 235,55 290,65 315,75" />
    <Road w={2} d="275,50 330,300 360,435 445,870" /><Road w={1} d="187,215 190,250 270,745 277,830 260,866" />
    <Road w={2} d="50,472 105,462 155,422 360,432 475,378" /><Road w={1} d="390,567 750,540 745,655" /><Road w={1} d="75,680 95,680 130,760 140,866" /><Road w={1} d="570,700 600,866" />
    <Road w={1} d="35,0 37,200 50,480 75,680" /><Road w={1} d="455,300 475,290 500,305" /><Road w={2} d="535,360 565,357 600,343 640,348 665,357 690,357" /><Road w={1} d="20,590 30,630 75,672" />
    <Yellow d="640,875 955,520 1075,490 1300,395 1400,403 1430,420 1541,505" /><Yellow d="1435,370 1541,100" />
  </g>
);

const MapText = styled.text<{ $c?: string; $s?: number; $i?: boolean }>`
  font-family: "Noto Sans", "Open Sans", sans-serif;
  font-size: ${p => p.$s ?? 11}px;
  font-style: ${p => p.$i ? 'italic' : 'normal'};
  fill: ${p => p.$c ?? '#222'};
  stroke: rgba(255, 255, 255, 0.75);
  stroke-width: 2px;
  paint-order: stroke;
  text-anchor: middle;
`;

const ScaleText = styled.text`
  font: bold 11px ${tahoma};
`;

const towns: [string, number, number][] = [
  ['Gać', 563, 179], ['Mąkosy Stare', 595, 286], ['Mąkosy Nowe', 482, 318], ['Dąbrowa Jastrzębska', 387, 389],
  ['Stoki', 770, 409], ['Ostrownica', 836, 382], ['Jaroszki', 836, 528], ['Karpówka', 936, 528], ['Jaśce', 950, 590],
  ['Brzezinki', 850, 635], ['Zadobrze', 805, 660], ['Jedlnia-Kolonia', 1017, 667], ['wska', 235, 570],
];

const Tree = ({ x, y, flip }: { x: number; y: number; flip: boolean }) => (
  <g transform={`translate(${x} ${y}) scale(${flip ? -1 : 1} 1)`} fill="none" stroke="#8bb880">
    <circle cx="-3" cy="-2" r="2.200" /><path d="M-3 0v4M3 -4 .5 2h5zM3 2v3" />
  </g>
);

const trees = [[14, 12], [58, 22], [101, 8], [34, 42], [80, 50], [120, 40], [10, 72], [52, 80], [96, 82], [30, 108], [72, 116], [114, 112]];

const MapDrawing = () => (
  <MapSvg viewBox="228 140 1092 549" preserveAspectRatio="xMinYMin slice" role="img" aria-label="Mapa">
    <defs>
      <pattern id="trees" width="128" height="128" patternUnits="userSpaceOnUse">
        {trees.map(([x, y], i) => <Tree key={i} x={x} y={y} flip={i % 2 === 1} />)}
      </pattern>
      <radialGradient id="knob"><stop offset="0" stopColor="#fff" /><stop offset="1" stopColor="#f4f6fa" /></radialGradient>
    </defs>
    <rect x="200" y="100" width="1800" height="1200" fill={FOREST} />
    <rect x="200" y="100" width="1800" height="1200" fill="url(#trees)" />
    <NorthWest /><SouthWest /><NorthEast /><SouthEast />
    {[0, 1, 2, 3].flatMap(i => [0, 1, 2, 3].map(j => <circle key={`${i}${j}`} cx={730 + i * 4 - j * 2} cy={446 + j * 5 + i * 2} r=".7" fill="#4c9a4c" />))}
    <rect x="1264" y="522" width="26" height="16" rx="2" fill="#f0f3cf" stroke="#c8c48e" />
    <MapText x="1277" y="534" $c="#4a4a30">737</MapText>
    {towns.map(([t, x, y]) => <MapText key={t} x={x} y={y}>{t}</MapText>)}
    {[['Rezerwat', 1062, 304], ['Ponty -', 1062, 316], ['Dęby', 1062, 328], ['Rezerwat', 1240, 484], ['Załamanek', 1240, 496]].map(([t, x, y]) => (
      <MapText key={`${t}${y}`} x={x} y={y} $c="#2c8a35" $s={10} $i>{t}</MapText>
    ))}
    {[['158 m', 1042, 236], ['Jaroszowa', 587, 558], ['Góra', 587, 570], ['166 m', 587, 582], ['174 m', 498, 661]].map(([t, x, y]) => (
      <MapText key={t} x={x} y={y} $c="#8a5433" $s={10}>{t}</MapText>
    ))}
    <MapText transform="translate(336 555) rotate(-55)" $c="#8a5a95" $s={10}>gmina Jastrzębia</MapText>
    <MapText transform="translate(613 155) rotate(-50)" $c="#8a5a95" $s={10}>gmina Ja..</MapText>
    <MapText transform="translate(1293 178) rotate(64)" $c="#8a5a95" $s={10}>powiat kozienicki</MapText>
    <MapText transform="translate(758 495) rotate(88)" $c="#1f8a2b" $s={10}>Kozienicki Park Krajobrazowy</MapText>
    <MapText transform="translate(814 478) rotate(-82)" $c="#3f78b5" $s={10} $i>Leniwka</MapText>

    <path d="M777 411q16-14 13-20l-8 2z" fill="#333" opacity=".3" />
    <path d="M773 412C767 401 760 395 760 387a13 13 0 0 1 26 0c0 8-7 14-13 25z" fill="#3fc20a" stroke="#1c8a0a" strokeWidth="2" />
    <path d="M766 387l2-6q1-1 5-1t5 1l2 6v7h-3v-2h-8v2h-3z" fill="#12680c" /><path d="M768 386l1-4h8l1 4z" fill="#5fd02b" />
    <circle cx="773" cy="415" r="3.500" fill="#0fc40f" />

    <path d="M249.500 160v140M246 229.500h7" stroke="#333" strokeWidth="1.500" />
    <path d="M244 201h9l3.500 4.500L253 210h-9z" fill="#fff" stroke="#c5c9d6" /><path d="M247 205.500h6" stroke="#777" />
    {[157, 302].map(y => <circle key={y} cx="250" cy={y} r="7.500" fill="url(#knob)" stroke="#bfc8d6" />)}
    <path d="M246 157h8M250 153v8M246 302h8" stroke="#666" strokeWidth="2" />
    <ScaleText x="232" y="669">0</ScaleText><ScaleText x="317" y="669">1</ScaleText><ScaleText x="400" y="669">2 km</ScaleText>
    <path d="M236 672v7h168v-7M320 675v4" fill="none" stroke="#fff" strokeWidth="4" />
    <path d="M236 672v7h168v-7M320 675v4" fill="none" stroke="#000" strokeWidth="2" />
  </MapSvg>
);

/* ---------- data ---------- */

const menu = ['System', 'Kartoteki', 'Raporty', 'Analiza kosztów', 'Status', 'Mapy', 'Narzędzia', 'Diagnostyka', 'Tachograf', 'Pomoc'];

const orange = <Pump c="#ffa50a" />;
const blue = <Pump c="#0b8fee" />;
const reports: [React.ReactNode, string][] = [
  [orange, 'Zużycie paliwa dla pojazdów - zbiorczy'], [orange, 'Tankowania i ubytki - zbiorczy'], [blue, 'Tankowania dla pojazdu'],
  [blue, 'Ubytki dla pojazdu'], [blue, 'Zużycie paliwa dla pojazdów'], [blue, 'Tankowania z dystrybutora dla jednostki'],
  [blue, 'Tankowania z dystrybutora dla pojazdu'], [blue, 'Tankowania z dystrybutora dla pojazdów'], [blue, 'Zmiany paliwa dla pojazdu'],
  [blue, 'Raport LPG'], [blue, 'Raport LPG tankowania'], [<Belt />, 'Raport bezpiecznej jazdy'], [<Leaf />, 'Raport ekonomicznej jazdy'],
  [<Runner c="#12c912" />, 'Raport ekonomicznej jazdy dla kierowcy'], [<Runner c="#2d9bf0" />, 'Raport bezpiecznej jazdy dla kierowcy'],
  [<Limit />, 'Raport przekroczeń prędkości'], [<Work />, 'Praca dzienna pojazdu'], [<Work />, 'Praca szczegółowa pracownika'],
  [<Work />, 'Praca dzienna pracownika'], [<Work />, 'Raport tras dla pracowników'],
];

const nav = [['pin', 'Status'], ['bars', 'Raporty'], ['coins', 'Analiza kosztów'], ['globe', 'Mapy'], ['drawer', 'Kartoteki'], ['wrench', 'Diagnostyka'], ['drawer', 'Tachograf']];

const params = [
  ['BZ - brak zasilania', 'Wył.'], ['ECO - Gwałtowne hamowanie', '0,00'], ['ECO - Gwałtowne przyspieszenie', '0,00'], ['ECO - Ostre zakręty', '0,00'],
  ['G - LPG', 'Wył.'], ['Identyfikator kierowcy', '0'], ['Licznik pojazdu CAN [km]', '90832,69'], ['Napięcie zasilania [V]', '14,97'],
  ['Obroty silnika CAN [obr/min]', '905'], ['Paliwo CAN [l]', '36,3'], ['PB - paliwo', 'Wł.'], ['Położenie pedału gazu [%]', '0,00'],
  ['Poziom sygnału GSM', '17'], ['Prędkość CAN [km/h]', '0,0'], ['Temperatura CPU [°C]', '0,00'], ['Temperatura silnika CAN [°C]', '23,00'],
  ['Widoczność satelit', '12'], ['Zapłon', 'Wł.'], ['Zużycie paliwa CAN [l]', '6259,6'],
];

const tabs = [['gear', 'Parametr...'], ['fork', 'POI - pu...'], ['gear', 'Grupy po...'], ['wheel', 'Tachograf'], ['house', 'Jednostki...'], ['flag', 'Planowa...'], ['disk', 'Deska ro...']];

type Column = { t: string; w?: number; a: Align; line: boolean };
const columns: Column[] = [
  { t: '', w: 101, a: 'left', line: true }, { t: 'Jednostka\norganizacyjna', w: 109, a: 'left', line: true }, { t: 'Ostatni\npomiar', w: 76, a: 'center', line: true },
  { t: 'Pozycja', a: 'left', line: true }, { t: 'Prac\na', w: 43, a: 'center', line: false }, { t: 'Prędkość', w: 66, a: 'right', line: true },
  { t: 'Obroty silnika', w: 81, a: 'right', line: true }, { t: 'Paliwo', w: 56, a: 'right', line: true }, { t: 'Zdarzenia, alarmy', w: 218, a: 'left', line: true },
  { t: 'Identyfikator', w: 179, a: 'left', line: true }, { t: 'Napięcie', w: 56, a: 'right', line: true }, { t: 'Satelity', w: 57, a: 'right', line: true },
  { t: 'Sygnał GSM', w: 91, a: 'right', line: true }, { t: 'Stan licznika', w: 103, a: 'right', line: true }, { t: 'Temperatury', w: 75, a: 'right', line: true },
];

type Vehicle = {
  plate: string; cut?: number; unit: string; time: string; city: string; rest: string; dim?: boolean; speed: string; rpm: string; fuel: string;
  chips: string; id: string; volt: string; sat: string; gsm: string; km: string; temp: string;
};
const W = 'Dział wdrożeniowy', H = 'Dział handlowy', T = 'Temperatury';
const vehicles: Vehicle[] = [
  { plate: '778YL Dacia', unit: W, time: '08:08:53', city: 'Kotuń', rest: '; ; Nadzieja; 2;', speed: '77,2', rpm: '2308', fuel: '18,0', chips: '#T *#T BZ JP *JS', id: '', volt: '14,03', sat: '12', gsm: '15', km: '134172,6 km', temp: '' },
  { plate: '3386065513281]', cut: -3, unit: H, time: '08:08:54', city: 'Pionki', rest: '; 26-670; Stoki 33;', speed: '0,0', rpm: '905', fuel: '36,3', chips: 'BZ G *PB', id: '', volt: '14,97', sat: '12', gsm: '17', km: '90832,7 km', temp: '0; 23' },
  { plate: 'ra BT', unit: T, time: '08:14:09', city: 'Pionki', rest: '; 26-670; Stoki 33;', dim: true, speed: '0,0', rpm: '', fuel: '', chips: 'BZ', id: '', volt: '14,85', sat: '0', gsm: '19', km: '', temp: '-11,8' },
  { plate: 'Y OPEL Combo', cut: -3, unit: W, time: '08:08:47', city: '', rest: '; 43190; Tychy; 44;', speed: '51,7', rpm: '1376', fuel: '28,2', chips: 'BZ JP *JS TP *TS', id: 'Kierowca: Stępień Dariusz', volt: '13,87', sat: '12', gsm: '27', km: '224712,3 km', temp: '69; 15' },
  { plate: '53386062210840]', cut: -6, unit: W, time: '08:08:52', city: 'Ksawerów', rest: '; 95-054; ; Łódzka;', speed: '15,0', rpm: '1760', fuel: '25,2', chips: 'BZ *G PB', id: 'Kierowca: Natorski Kamil', volt: '13,66', sat: '12', gsm: '25', km: '251037,0 km', temp: '0; 7' },
  { plate: '53386062162744]', cut: -6, unit: W, time: '08:09:05', city: 'Dębica', rest: '; 39-200; Latoszyn 2;', speed: '56,0', rpm: '2336', fuel: '22,8', chips: 'BZ *G PB', id: 'Kierowca: ŁYŻWIŃSKI Dominik', volt: '14,03', sat: '12', gsm: '28', km: '225200,2 km', temp: '0; 25' },
  { plate: 'n Berlingo II', cut: -3, unit: W, time: '08:08:52', city: '', rest: '; 62-204; Gniezno; Franklina Roosevelta;', speed: '37,5', rpm: '1575', fuel: '57,6', chips: '#T *#T BZ JP *JS', id: 'Kierowca: Płatos Bartłomiej', volt: '13,98', sat: '12', gsm: '18', km: '412575,7 km', temp: '83; 39' },
  { plate: 'X OPEL Astra BT', cut: -3, unit: T, time: '08:04:30', city: '', rest: '; 26-617; Radom; Królowej Jadwigi 4;', dim: true, speed: '0,0', rpm: '', fuel: '', chips: 'BZ', id: '', volt: '15,17', sat: '0', gsm: '16', km: '10,0 km', temp: '13,1' },
  { plate: 'Opel Astra J', cut: 3, unit: H, time: '08:09:01', city: 'Kunów', rest: '; 27-415; Nietulisko Małe 137;', speed: '61,0', rpm: '2043', fuel: '32,2', chips: 'BZ *G PB', id: '86162095721212', volt: '15,36', sat: '12', gsm: '20', km: '96439,1 km', temp: '107; 31' },
  { plate: 'PEL Astra K', cut: -3, unit: H, time: '08:09:02', city: '', rest: '; 02-472; Warszawa; Śląska 8;', speed: '13,3', rpm: '1463', fuel: '34,2', chips: 'BZ', id: '', volt: '13,61', sat: '12', gsm: '28', km: '86382,4 km', temp: '36; 3' },
];

const lines = (t: string) => t.split('\n').map((s, i) => <React.Fragment key={i}>{i > 0 && <br />}{s}</React.Fragment>);

/* ---------- sections ---------- */

const ContactIcons = () => (
  <Contacts>
    <svg width="27" height="17" viewBox="0 0 27 17"><path d="M0 0h21v16H0z" fill="#e2e4e6" /><path d="M2 3l8.500 6L19 3" fill="none" stroke="#444" strokeWidth="1.800" /><path d="M14 16.500 20.500 5 27 16.500z" fill="#f59a1e" /><path d="M20.500 9v4M20.500 14v1.500" stroke="#8a5200" strokeWidth="1.500" /></svg>
    <svg width="17" height="17" viewBox="0 0 17 17"><rect width="17" height="17" rx="2" fill="#e2e4e6" /><circle cx="8.500" cy="8.500" r="6.500" fill="#333" /><path d="M3 8.500 6.500 5.500v2h4v-2L14 8.500l-3.500 3v-2h-4v2z" fill="#e2e4e6" /></svg>
    <svg width="17" height="17" viewBox="0 0 17 17"><rect width="17" height="17" rx="2" fill="#e2e4e6" /><path d="M10 17v-6H7V8.500h3V6.500Q10 3 14 3.500v2.300q-2-.2-1.800 1.200v1.500H14l-.4 2.500h-1.400v6z" fill="#333" /></svg>
    <svg width="17" height="17" viewBox="0 0 17 17"><rect width="17" height="17" rx="2" fill="#e2e4e6" /><path d="M4 3l2-.5 1.500 3-1.300 1.500q1 2.500 3.700 4l1.600-1.400L14 11.500 13 14q-3 .5-6.500-3T4 3z" fill="#333" /></svg>
    <svg width="21" height="20" viewBox="0 0 21 20"><path d="M0 0h21v16H4l-4 4z" fill="#e2e4e6" /><text x="10.500" y="11" fontSize="8" fontWeight="bold" fontFamily="DejaVu Sans Condensed" textAnchor="middle" fill="#333">SMS</text></svg>
  </Contacts>
);

const SidePanel = () => (
  <Sidebar>
    <SideHeader>Raporty<Collapse aria-label="Zwiń">«</Collapse></SideHeader>
    <ListBox>
      <SearchRow>
        <svg width="11" height="11" viewBox="0 0 11 11" fill="none" stroke="#222"><circle cx="4.500" cy="4.500" r="3" strokeWidth="1.800" /><path d="M7 7l3 3" strokeWidth="2.500" /></svg>
        <SearchBox>
          <TextInput placeholder="Szukaj ..." aria-label="Szukaj" />
          <ClearButton aria-label="Wyczyść"><Cross s={8} w={2.4} c="#666" /></ClearButton>
        </SearchBox>
      </SearchRow>
      <ListArea>
        <ReportList>
          {reports.map(([icon, label]) => <ReportItem key={label}><ReportButton>{icon}<span>{label}</span></ReportButton></ReportItem>)}
        </ReportList>
        <SideVScroll>
          <Triangle r={0} /><SideThumb><svg width="9" height="8" stroke="#ccc"><path d="M0 .5h9M0 2.500h9M0 4.500h9M0 6.500h9" /></svg></SideThumb><Triangle r={180} />
        </SideVScroll>
      </ListArea>
      <SideHScroll>
        <Triangle r={-90} /><SideThumb $wide><svg width="8" height="9" stroke="#ccc"><path d="M.5 0v9M2.500 0v9M4.500 0v9M6.500 0v9" /></svg></SideThumb><Triangle r={90} />
      </SideHScroll>
    </ListBox>
    <Grip />
    <NavList>
      {nav.map(([k, t]) => <NavButton key={t} $active={t === 'Raporty'}><NavIcon kind={k} /><span>{t}</span></NavButton>)}
      <NavFooter>
        <svg width="9" height="13" viewBox="0 0 9 13" fill="none" stroke="#111"><path d="M1 0.500l3 2.500-3 2.500M5 .5l3 2.500-3 2.500" strokeWidth="1.400" /><path d="M2 10h5l-2.500 2.500z" fill="#111" stroke="none" /></svg>
      </NavFooter>
    </NavList>
  </Sidebar>
);

const MapSection = () => (
  <MapPanel>
    <PanelTitle $active>Lokalizacja<Pin /></PanelTitle>
    <MapView>
      <MapDrawing />
      <MapTools>
        <MapTool $wide>
          <svg width="19" height="18" viewBox="0 0 19 18" fill="none"><path d="M6 2q7-3 11 3 2 6-4 10-4 2-8 1" stroke="#f08c28" strokeWidth="2" /><path d="M1 3q1 5 6 5h2V4.500l4.500 5L9 14v-3.500H6Q0 10 1 3z" fill="#e03127" /></svg>
          Emapa
        </MapTool>
        <MapTool $wide $on>
          <svg width="18" height="18" viewBox="0 0 18 18"><path d="M0 1h17v16H0z" fill="#a9d58f" /><path d="M0 6l8-5h4L0 11z" fill="#f0efd2" /><circle cx="11" cy="6.500" r="5" fill="#dcebf3" stroke="#888" strokeWidth="1.500" /><path d="M7 11l-6 6" stroke="#222" strokeWidth="3" /></svg>
          OpenStreetMap
        </MapTool>
        <MapTool aria-label="Trasa"><svg width="13" height="16" viewBox="0 0 13 16" fill="none" stroke="#1a8fe8" strokeWidth="2"><path d="M3 14V7.500L10.500 3" /><circle cx="3" cy="14" r="1" /><circle cx="10.500" cy="3" r="1" /><circle cx="3.500" cy="7" r="1" /></svg></MapTool>
        <MapTool aria-label="Globus"><svg width="17" height="17" viewBox="0 0 17 17"><circle cx="8.500" cy="8.500" r="8" fill="#26aecb" stroke="#186b7d" /><path d="M2 4q3-3 6-3l-1 4-2 2 2 2-1 5Q1 10 2 4zM10 4l4-1q3 4 1 7l-3 2-1-4z" fill="#236b3c" /></svg></MapTool>
      </MapTools>
      <Attribution href="#osm">Źródło mapy: OpenStreetMap.org</Attribution>
    </MapView>
  </MapPanel>
);

const ParamSection = () => (
  <ParamPanel>
    <PanelTitle>Parametry obiektu<Pin /></PanelTitle>
    <ParamFrame>
      <ParamTable>
        <colgroup><col style={{ width: 160 }} /><col /><col style={{ width: 80 }} /><col style={{ width: 11 }} /></colgroup>
        <thead><tr><th>Parametr</th><th>Ostatni pomiar</th><th>Wartość</th><th aria-label="pusta" /></tr></thead>
        <tbody>
          {params.map(([name, value], i) => (
            <ParamRow key={name} $odd={i % 2 === 1}>
              <td>{i === 2 ? <TwoLines>{name}</TwoLines> : name}</td><td>2021-01-19 08:08:54</td><td>{value}</td><td />
            </ParamRow>
          ))}
          {[0, 1, 2, 3, 4, 5, 6].map(i => <ParamRow key={i}><td /><td /><td /><td /></ParamRow>)}
        </tbody>
      </ParamTable>
    </ParamFrame>
    <BottomTabs>
      {tabs.map(([k, t], i) => <BottomTab key={t} $active={i === 0}><TabIcon kind={k} />{t}</BottomTab>)}
    </BottomTabs>
    <RowHighlight $w={5} />
  </ParamPanel>
);

const VehicleRow = ({ v, i }: { v: Vehicle; i: number }) => {
  const sel = i === 1;
  return (
    <Row $sel={sel} $odd={i % 2 === 1}>
      <Cell $top $pad={0}><Plate $cut={v.cut} $sel={sel}>{v.plate}</Plate></Cell>
      <Cell $pad={6}>{v.unit}</Cell>
      <Cell $a="center">2021-01-19<br />{v.time}</Cell>
      <Cell $top><Place $dim={v.dim}><b>{v.city}</b>{v.rest}</Place></Cell>
      <Cell $shade={!sel}><Car sel={sel} /></Cell>
      <Cell $a="right">{v.speed}</Cell>
      <Cell $a="right">{v.rpm}</Cell>
      <Cell $a="right">{v.fuel}</Cell>
      <Cell><Chips>{v.chips.split(' ').map(c => <Chip key={c} $on={c[0] === '*'}>{c.replace('*', '')}</Chip>)}</Chips></Cell>
      <Cell $top>{v.id}</Cell>
      <Cell $a="right">{v.volt}</Cell>
      <Cell $a="right">{v.sat}</Cell>
      <Cell $a="right">{v.gsm}</Cell>
      <Cell $a="right">{v.km}</Cell>
      <Cell $a="right">{v.temp}</Cell>
    </Row>
  );
};

const GridSection = () => (
  <GridPanel>
    <GridArea>
      <GridScroll>
        <Grid>
          <colgroup>{columns.map(c => <col key={c.t} style={{ width: c.w }} />)}</colgroup>
          <thead>
            <tr>
              {columns.map(c => (
                <Head key={c.t} $a={c.a} $line={c.line}>
                  {c.t.startsWith('Prac') ? <SortHead><span>{lines(c.t)}</span><Triangle r={0} c="#666" s={8} /></SortHead> : lines(c.t)}
                </Head>
              ))}
            </tr>
          </thead>
          <tbody>{vehicles.map((v, i) => <VehicleRow key={v.plate} v={v} i={i} />)}</tbody>
        </Grid>
      </GridScroll>
      <VScroll>
        <ArrowButton aria-label="W górę"><Chevron r={0} /></ArrowButton><VThumb /><ArrowButton aria-label="W dół"><Chevron r={180} /></ArrowButton>
      </VScroll>
    </GridArea>
    <HScroll>
      <ArrowButton aria-label="W lewo"><Chevron r={-90} /></ArrowButton><HThumb /><ArrowButton aria-label="W prawo"><Chevron r={90} /></ArrowButton><VScroll />
    </HScroll>
    <ColumnHighlight $w={10} />
  </GridPanel>
);

export default function App() {
  return (
    <Window>
      <Global />
      <TitleBar>
        <svg width="16" height="16" viewBox="0 0 16 16"><rect x=".5" y=".5" width="15" height="15" rx="2" fill="#fff" stroke="#ccc" /><path d="M8 2a4.500 4.500 0 0 0-4.500 4.500C3.500 10 8 14 8 14s4.500-4 4.500-7.500A4.500 4.500 0 0 0 8 2zm0 2.500a2 2 0 1 1 0 4 2 2 0 0 1 0-4z" fill="#999" fillRule="evenodd" /></svg>
        {'MyCar Business - [TekomTest] -  serwisadmin'}
        <Spacer />
        <WindowButtons>
          <button aria-label="Minimalizuj"><svg width="11" height="11" stroke="#000"><path d="M0 5.500h10" /></svg></button>
          <button aria-label="Przywróć"><svg width="11" height="11" fill="none" stroke="#000"><path d="M.5 2.500h7v8h-7zM2.500 2.500v-2h8v8h-3" /></svg></button>
          <button aria-label="Zamknij"><Cross s={12} w={1} c="#000" /></button>
        </WindowButtons>
      </TitleBar>
      <MenuBar>
        {menu.map(m => <button key={m}>{m}</button>)}
        <Spacer />
        <ContactIcons />
      </MenuBar>
      <Body>
        <SidePanel />
        <Splitter />
        <Document>
          <TabStrip>
            <DocTab>Status tabelaryczny<Cross s={9} w={2.6} c="#d01818" /></DocTab>
            <Spacer />
            <StripButtons><Triangle r={180} c="#111" s={8} /><Cross s={10} w={1.8} c="#111" /></StripButtons>
          </TabStrip>
          <Toolbar>
            <svg width="16" height="17" viewBox="0 0 16 17" fill="none"><path d="M1 15V11q2-1 3-3h4l3 3 3 1v3z" stroke="#e25353" strokeWidth="1.500" /><path d="M10.500 0v7M7 3.500h7" stroke="#35b01c" strokeWidth="2.500" /><circle cx="4" cy="15" r="1.500" fill="#35b01c" /><circle cx="12" cy="15" r="1.500" fill="#35b01c" /></svg>
            <Divider />
            <FilterLabel>Filtr:<FilterInput /></FilterLabel>
            <Spacer />
            <svg width="16" height="16" viewBox="0 0 16 16"><circle cx="8" cy="8" r="7.500" fill="#2f7de8" stroke="#1b58b8" /><path d="M8 3v2.500M8 6.500v6" stroke="#fff" strokeWidth="2.500" /></svg>
          </Toolbar>
          <Panels><MapSection /><ParamSection /></Panels>
          <GridSection />
        </Document>
      </Body>
    </Window>
  );
}
